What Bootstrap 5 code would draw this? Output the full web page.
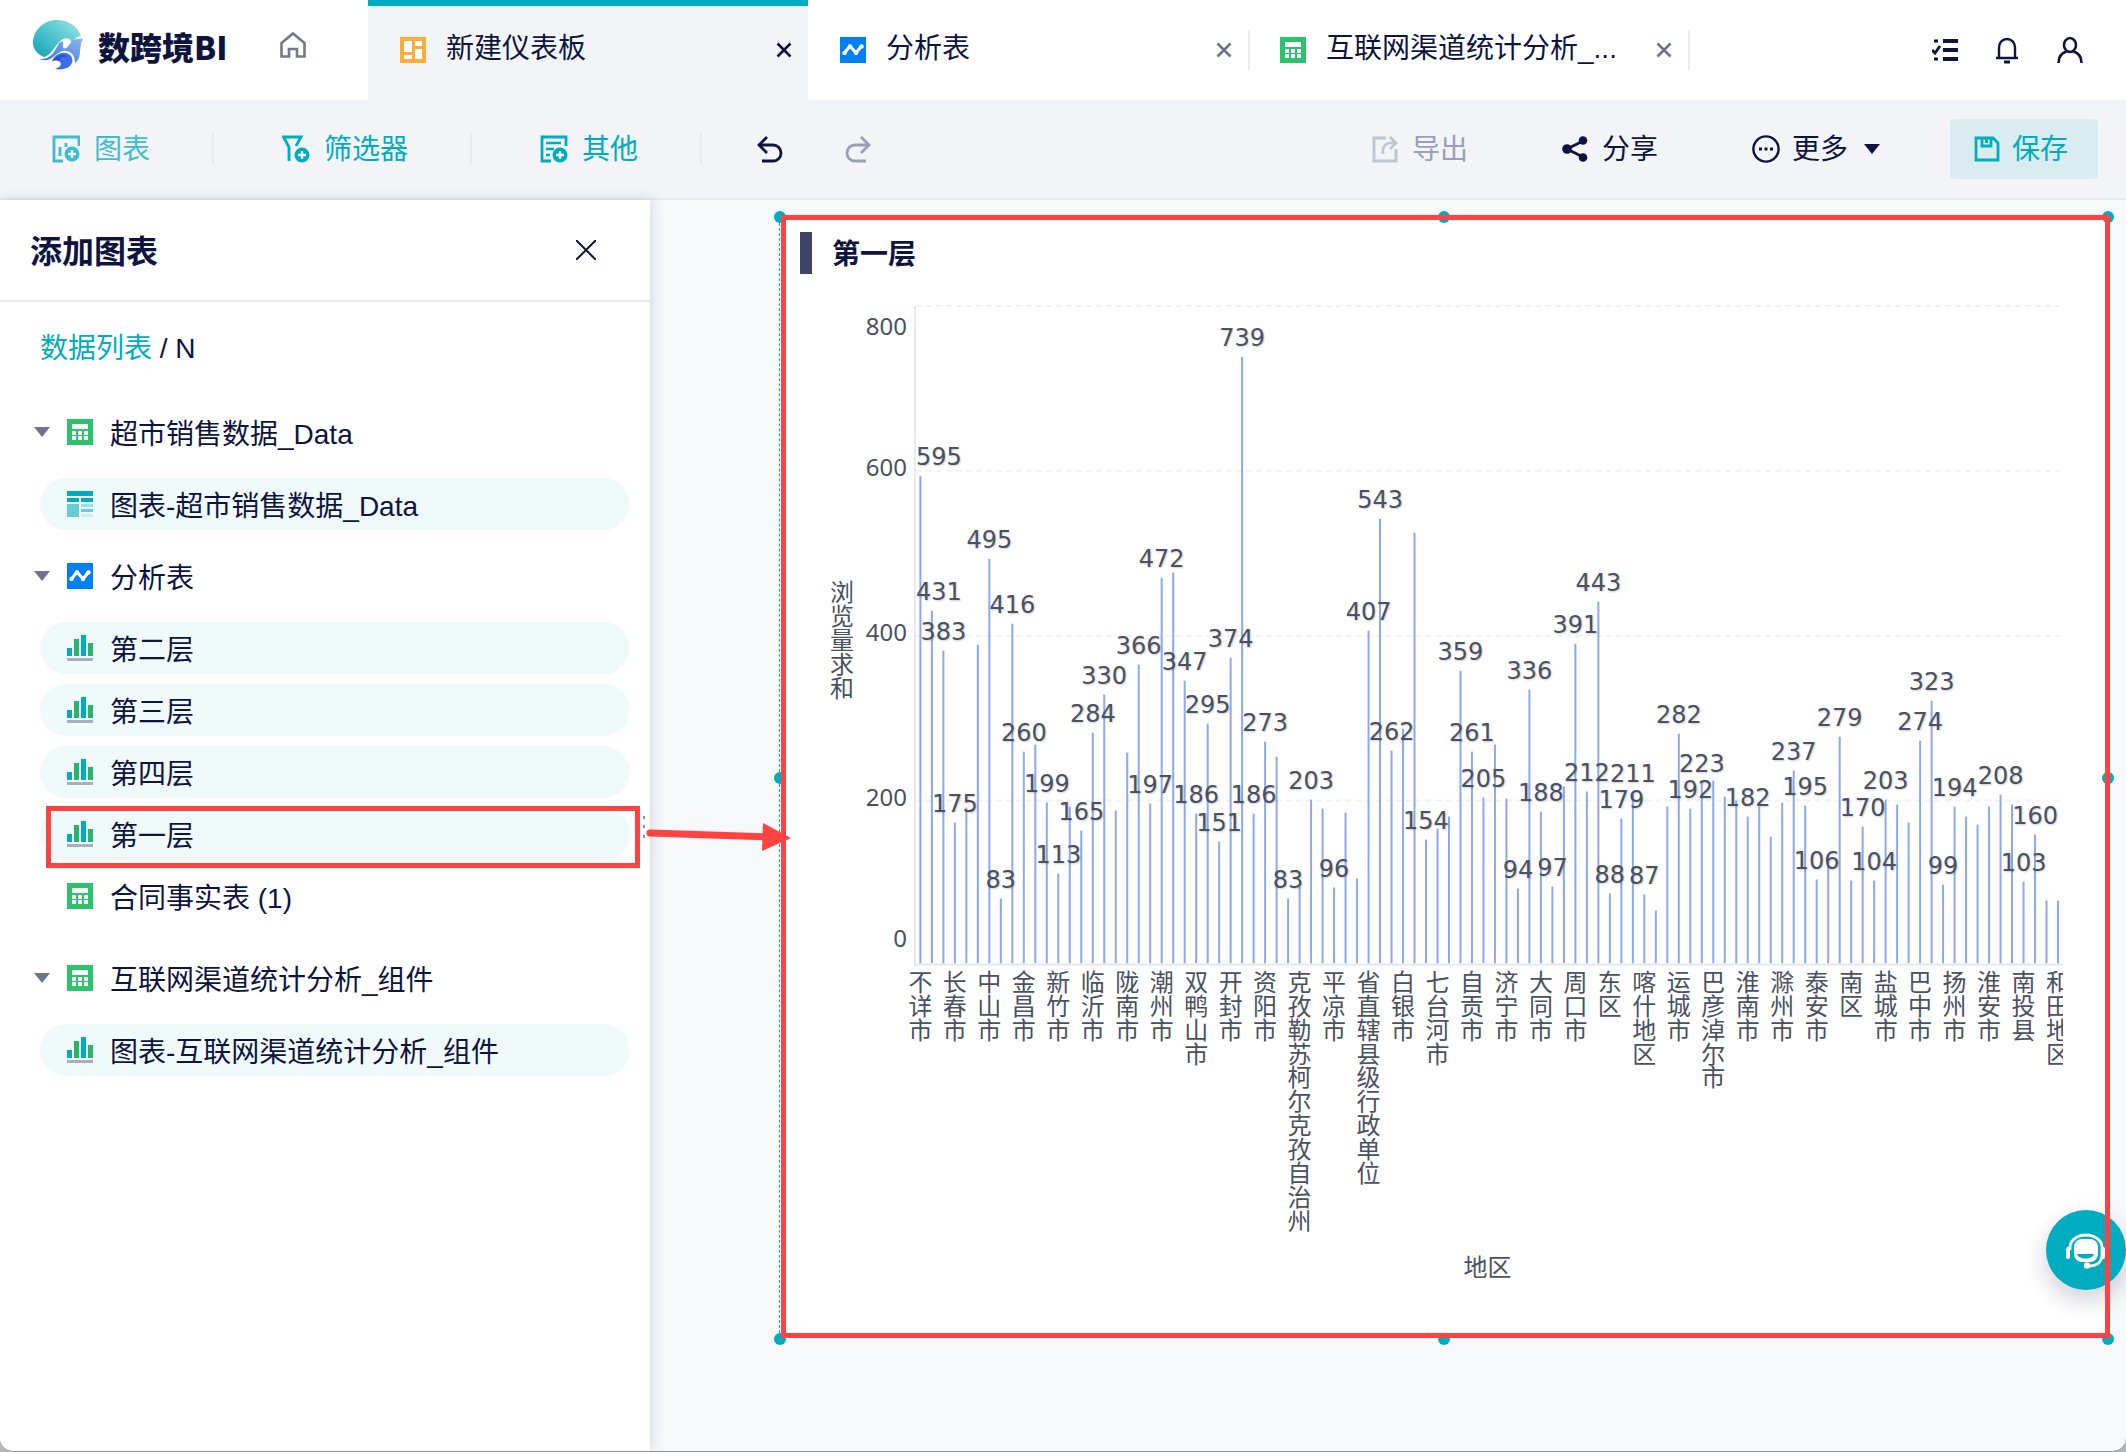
<!DOCTYPE html>
<html lang="zh-CN">
<head>
<meta charset="utf-8">
<meta name="viewport" content="width=device-width, initial-scale=1">
<title>数跨境BI</title>
<link href="https://cdn.jsdelivr.net/npm/bootstrap@5.3.0/dist/css/bootstrap.min.css" rel="stylesheet">
<style>
:root{--ink:#0e1440;--teal:#00acc0;--muted:#6f748e;--line:#e8eaee;--bar-bg:#f2f4f8;--alert:#ff4343}
body{font-family:"Liberation Sans","Noto Sans CJK SC",sans-serif;font-size:28px;line-height:40px;color:var(--ink);background:#b5b5b5}
svg{display:block;flex:none}
.app{border-radius:0 0 14px 14px;border-bottom:1px solid #949494;background:#f6f8fa}
.topbar{height:100px}
.brand{width:368px;padding-left:32px}
.brand-name{font-family:"Noto Sans CJK SC",sans-serif;font-size:32px;font-weight:900;line-height:40px;margin:0 52px 0 14px}
.brand-mark{margin-bottom:6px}
.brand-name{margin-bottom:4px}
.brand .home{margin-bottom:6px}
.tab{width:440px;padding:0 16px 2px 32px}
.tab.on{background:var(--bar-bg);box-shadow:inset 0 6px var(--teal)}
.tab a{color:var(--ink);gap:20px}
.tab a svg{margin-top:2px}
.tab.on .tab-x{color:var(--ink)}
.tab-x,.plain{border:0;background:none;padding:0;color:var(--muted)}
.tab-x{margin-top:2px}
.rule{width:2px;background:var(--line)}
.topbar .rule{height:40px;margin-right:-2px}
.tools{height:100px;background:var(--bar-bg);border-bottom:2px solid #e7e9ec;padding:0 28px 0 52px}
.tools .rule{height:32px;margin:0 68px 0 62px}
.tool{display:flex;align-items:center;gap:14px;border:0;background:none;padding:2px 0 0;color:var(--teal);white-space:nowrap}
.tool>svg,.tool>.caret{margin-bottom:2px}
.tool.dark{color:var(--ink)}
.tool.off{color:#9a9fb5}
.save{width:148px;height:60px;border-radius:4px;background:#d9edf0;padding-left:24px;margin-left:70px;gap:12px}
.side{width:650px;z-index:2;box-shadow:2px 0 12px rgba(15,20,64,.14)}
.side-head{height:102px;border-bottom:2px solid var(--line);padding:0 54px 0 30px}
.side-head h2{font-size:32px;font-weight:700;line-height:40px;padding-top:4px}
.crumb{padding:27px 40px 0;height:104px}
.crumb a{color:var(--teal)}
.tree{padding:0 20px 0 40px}
.node{display:flex;align-items:center;width:100%;height:52px;border:0;background:none;color:var(--ink);border-radius:26px;padding:6px 0 0 27px;gap:17px;text-align:left;white-space:nowrap}
.node>svg,.node>.caret{margin-bottom:6px}
.node.leaf{background:#f0fafb}
.node .caret{margin-left:-33px}
.caret{width:16px;height:10px;background:currentColor;clip-path:polygon(0 0,100% 0,50% 100%)}
.node .caret{color:var(--muted)}
.pick-frame{position:absolute;inset:-2px -10px -8px 6px;border:5px solid var(--alert);pointer-events:none}
.pick-arrow{position:absolute;left:100%;top:5px;margin-left:10px}
.canvas{padding:18px 18px 113px 129px}
.panel{height:1120px;border:1px dashed var(--teal);background:#fff}
.panel-frame{position:absolute;inset:-4px -3px -1px 1px;border:5px solid var(--alert);z-index:3;pointer-events:none}
.knobs{position:absolute;inset:-2px -1px -2px 0;pointer-events:none}
.knob{position:absolute;width:12px;height:12px;border-radius:50%;background:var(--teal);transform:translate(-50%,-50%)}
.panel-head{height:71px;padding:13px 20px 0}
.panel-head i{width:12px;height:42px;background:#3f4468}
.panel-head h3{font-size:28px;line-height:42px;font-weight:700;margin-left:20px;padding-top:2px}
.plot{padding-right:44px}
.plot text{font-family:"Noto Sans","Noto Sans CJK SC",sans-serif;font-size:24px;fill:#4a5160}
.plot .val{font-family:"DejaVu Sans",sans-serif;text-anchor:middle;text-shadow:1px 1px 2px rgba(0,0,0,.2)}
.plot .cat{writing-mode:vertical-rl;font-family:"Noto Sans CJK SC",sans-serif}
.help{position:absolute;right:0;bottom:161px;width:80px;height:80px;border:0;border-radius:50%;background:var(--teal);z-index:1;padding:0;box-shadow:0 10px 24px rgba(15,20,64,.2)}
</style>
<script src="https://cdn.jsdelivr.net/npm/bootstrap@5.3.0/dist/js/bootstrap.bundle.min.js"></script>
</head>
<body>
<svg width="0" height="0" class="position-absolute" aria-hidden="true">
  <defs>
    <symbol id="i-sheet" viewBox="0 0 26 26"><path fill="#2bc46d" d="M0 0h26v26H0z"/><path fill="#fff" d="M5 5h16v5H5zM5 12h4v4H5zm6 0h4v4h-4zm6 0h4v4h-4zM5 17h4v4H5zm6 0h4v4h-4zm6 0h4v4h-4z"/></symbol>
    <symbol id="i-line" viewBox="0 0 26 26"><path fill="#0080f5" d="M0 0h26v26H0z"/><path d="M4.500 16 10 9l6 7 5.500-7" fill="none" stroke="#fff" stroke-width="3" stroke-linejoin="round" stroke-linecap="round"/><g fill="#fff"><circle cx="4.500" cy="16" r="2.200"/><circle cx="10" cy="9.500" r="2.200"/><circle cx="16" cy="16" r="2.200"/><circle cx="21.500" cy="9.500" r="2.200"/></g></symbol>
    <symbol id="i-bars" viewBox="0 0 26 26"><path fill="#00acc0" d="M0 13h5v8H0zM14 0h5v21h-5z"/><path fill="#2ab56a" d="M7 4h5v17H7zM21 8h5v13h-5z"/><path fill="#a9afc0" d="M0 23h26v3H0z"/></symbol>
    <symbol id="i-table" viewBox="0 0 26 26"><path fill="#00acc0" d="M0 0h26v5H0zM0 7h12v4H0zm14 0h12v4H14z"/><path fill="#66ccd8" d="M0 13h12v13H0zM14 18h12v3H14z"/><path fill="#99dde5" d="M14 13h12v3H14z"/><path fill="#ccecf1" d="M14 23h12v3H14z"/></symbol>
    <symbol id="i-x" viewBox="0 0 16 16"><path d="m1.500 1.500 13 13m0-13-13 13" fill="none" stroke="currentColor" stroke-width="2.600"/></symbol>
    <symbol id="i-plus" viewBox="0 0 16 16"><circle cx="8" cy="8" r="7.500" fill="currentColor"/><path d="M8 4v8M4 8h8" stroke="#f2f4f8" stroke-width="2.400"/></symbol>
  </defs>
</svg>

<div class="app min-vh-100 d-flex flex-column overflow-hidden">
  <header class="topbar bg-white d-flex align-items-center">
    <div class="brand d-flex align-items-center pb-1">
      <svg class="brand-mark" width="52" height="50" viewBox="0 0 52 50" role="img" aria-label="logo">
        <defs>
          <linearGradient id="g1" x1="1" y1="0" x2="0" y2="1"><stop offset="0" stop-color="#a6e3e4"/><stop offset=".5" stop-color="#4fc6cf"/><stop offset="1" stop-color="#12a0b4"/></linearGradient>
          <linearGradient id="g2" x1="1" y1="0" x2="0" y2="1"><stop offset="0" stop-color="#8fb6f2"/><stop offset="1" stop-color="#2d6fe0"/></linearGradient>
        </defs>
        <path fill="url(#g1)" d="M25 0c12 0 21 7 24 16-4 0-6 3-9 7-1-4-5-6-9-4-8 4-10 16-19 18C5 34 1 29 1 23 1 10 12 0 25 0z"/>
        <path fill="url(#g2)" d="M7 39c12 1 15-7 19-14 3-5 6-4 5 0-1 4 3 5 6 0 4-6 8-7 14-6-2 3-2 6-3 12 0 6-2 10-5 12 0-8-5-13-12-12-6 1-8 6-13 8-4 2-8 1-11 0z"/>
        <path fill="#3f6ee8" d="M20 41c3-7 12-11 18-6 4 4 3 10-3 13-3 1-8 2-12 1 5-2 7-4 5-7-2-2-5-2-8-1z"/>
        <path fill="#2a52d0" d="M20 41c5-7 12-8 16-4-5-1-8 0-9 4-2-1-5-1-7 0z"/>
      </svg>
      <span class="brand-name">数跨境BI</span>
      <a href="#" aria-label="首页" class="home"><svg width="28" height="28" viewBox="0 0 28 28"><path d="M2.500 12 14 2.500 25.500 12v13.500H18V18h-8v7.500H2.500z" fill="none" stroke="#73788c" stroke-width="2.600"/></svg></a>
    </div>
    <nav class="d-flex align-items-center h-100 text-nowrap">
      <div class="tab on h-100 d-flex align-items-center justify-content-between">
        <a href="#" class="d-flex align-items-center text-decoration-none"><svg width="26" height="26" viewBox="0 0 26 26"><path fill="#ffac38" d="M0 0h26v26H0z"/><path fill="#fff" d="M4 4h8v11H4zM4 18h8v4H4zM15 4h7v5h-7zM15 12h7v10h-7z"/></svg>新建仪表板</a>
        <button class="tab-x" aria-label="关闭"><svg width="16" height="16"><use href="#i-x"/></svg></button>
      </div>
      <div class="tab h-100 d-flex align-items-center justify-content-between">
        <a href="#" class="d-flex align-items-center text-decoration-none"><svg width="26" height="26"><use href="#i-line"/></svg>分析表</a>
        <button class="tab-x" aria-label="关闭"><svg width="16" height="16"><use href="#i-x"/></svg></button>
      </div>
      <span class="rule"></span>
      <div class="tab h-100 d-flex align-items-center justify-content-between">
        <a href="#" class="d-flex align-items-center text-decoration-none"><svg width="26" height="26"><use href="#i-sheet"/></svg>互联网渠道统计分析_...</a>
        <button class="tab-x" aria-label="关闭"><svg width="16" height="16"><use href="#i-x"/></svg></button>
      </div>
      <span class="rule"></span>
    </nav>
    <div class="d-flex align-items-center ms-auto" style="gap:36px;padding-right:42px">
      <button class="plain" aria-label="任务"><svg width="26" height="26" viewBox="0 0 26 26"><path d="M11 4h15M11 13h15M11 22h15" stroke="#0e1440" stroke-width="3.800"/><path d="M2 4h4M2 22h4M0 13l3 3 5-7" stroke="#0e1440" stroke-width="2.800" fill="none"/></svg></button>
      <button class="plain" aria-label="通知"><svg width="26" height="28" viewBox="0 0 26 28"><path d="M2 22h22M5 22V11a8 8 0 0 1 16 0v11" stroke="#0e1440" stroke-width="2.400" fill="none"/><path d="M10 26h6" stroke="#0e1440" stroke-width="3"/></svg></button>
      <button class="plain" aria-label="用户"><svg width="28" height="28" viewBox="0 0 28 28"><ellipse cx="14" cy="9" rx="6" ry="7" stroke="#0e1440" stroke-width="2.600" fill="none"/><path d="M2.500 27c0-6 3-10 8-11.500M25.500 27c0-6-3-10-8-11.500" stroke="#0e1440" stroke-width="2.600" fill="none"/></svg></button>
    </div>
  </header>

  <div class="tools d-flex align-items-center">
    <button class="tool opacity-75"><svg width="28" height="28" viewBox="0 0 28 28"><path d="M27 11V2H2v24h9" fill="none" stroke="currentColor" stroke-width="2.800"/><path d="M8 12v9M14 8v4" stroke="currentColor" stroke-width="2.800"/><use href="#i-plus" x="12" y="11" width="16" height="16"/></svg>图表</button>
    <span class="rule"></span>
    <button class="tool"><svg width="28" height="28" viewBox="0 0 28 28"><path d="M7 26V12L1.500 2H19l-5 9" fill="none" stroke="currentColor" stroke-width="2.800"/><use href="#i-plus" x="12" y="12" width="16" height="16"/></svg>筛选器</button>
    <span class="rule"></span>
    <button class="tool"><svg width="28" height="28" viewBox="0 0 28 28"><path d="M26 11V2H2v24h9" fill="none" stroke="currentColor" stroke-width="2.800"/><path d="M6 8h15M6 14h8M6 20h4" stroke="currentColor" stroke-width="2.600"/><use href="#i-plus" x="12" y="12" width="16" height="16"/></svg>其他</button>
    <span class="rule"></span>
    <div class="d-flex" style="gap:60px;margin-left:-14px">
      <button class="tool dark" aria-label="撤销"><svg width="28" height="28" viewBox="0 0 28 28"><path d="M11 2 3 10l8 8M3 10h14a8 8 0 0 1 0 16H6" fill="none" stroke="currentColor" stroke-width="2.800"/></svg></button>
      <button class="tool off" aria-label="重做"><svg width="28" height="28" viewBox="0 0 28 28"><path d="m17 2 8 8-8 8m8-8H11a8 8 0 0 0 0 16h11" fill="none" stroke="currentColor" stroke-width="2.800"/></svg></button>
    </div>
    <div class="d-flex align-items-center ms-auto">
      <button class="tool off"><svg width="26" height="28" viewBox="0 0 26 28" opacity=".55"><path d="M14 3H2v23h22V14" fill="none" stroke="currentColor" stroke-width="2.800"/><path d="M11 19v-4a7 7 0 0 1 7-7h6M18 2l6 6-6 6" fill="none" stroke="currentColor" stroke-width="2.600"/></svg>导出</button>
      <button class="tool dark" style="margin-left:94px"><svg width="26" height="26" viewBox="0 0 26 26"><path d="M21 5 5 13l16 8" fill="none" stroke="currentColor" stroke-width="2.800"/><g fill="currentColor"><circle cx="21" cy="4.500" r="4.300"/><circle cx="5" cy="13" r="4.800"/><circle cx="21" cy="21.500" r="4.300"/></g></svg>分享</button>
      <button class="tool dark" style="margin-left:94px;gap:12px"><svg width="28" height="28" viewBox="0 0 28 28"><circle cx="14" cy="14" r="12.600" fill="none" stroke="currentColor" stroke-width="2.400"/><path d="M7 14h3m2.500 0h3M18 14h3" stroke="currentColor" stroke-width="2.800"/></svg>更多<span class="caret ms-1"></span></button>
      <button class="tool save"><svg width="26" height="26" viewBox="0 0 26 26"><path d="M2 2h17l5 5v17H2zM8 2v8h9V2M12.500 3v4" fill="none" stroke="currentColor" stroke-width="2.800"/></svg>保存</button>
    </div>
  </div>

  <main class="d-flex flex-grow-1 position-relative">
    <aside class="side bg-white position-relative flex-shrink-0">
      <div class="side-head d-flex align-items-center justify-content-between">
        <h2 class="m-0">添加图表</h2>
        <button class="plain" aria-label="关闭"><svg width="20" height="20" viewBox="0 0 20 20"><path d="m0 0 20 20M20 0 0 20" stroke="#0e1440" stroke-width="2"/></svg></button>
      </div>
      <div class="crumb"><a href="#" class="text-decoration-none">数据列表</a> / N</div>
      <div class="tree">
        <button class="node"><span class="caret"></span><svg width="26" height="26"><use href="#i-sheet"/></svg>超市销售数据_Data</button>
        <button class="node leaf" style="margin:20px 0"><svg width="26" height="26"><use href="#i-table"/></svg>图表-超市销售数据_Data</button>
        <button class="node"><span class="caret"></span><svg width="26" height="26"><use href="#i-line"/></svg>分析表</button>
        <div class="d-grid" style="gap:10px;margin:20px 0 30px">
          <button class="node leaf"><svg width="26" height="26"><use href="#i-bars"/></svg>第二层</button>
          <button class="node leaf"><svg width="26" height="26"><use href="#i-bars"/></svg>第三层</button>
          <button class="node leaf"><svg width="26" height="26"><use href="#i-bars"/></svg>第四层</button>
          <div class="position-relative">
            <button class="node leaf"><svg width="26" height="26"><use href="#i-bars"/></svg>第一层</button>
            <span class="pick-frame"></span>
            <svg class="pick-arrow" width="152" height="44" viewBox="0 0 152 44"><path d="M4 3v3m0 6v3m0 7v3" stroke="#8b90a5" stroke-width="2"/><path d="m10 20 118 4" stroke="#ff4343" stroke-width="7" stroke-linecap="round"/><path d="m123 10 28 15-29 13z" fill="#ff4343"/></svg>
          </div>
          <button class="node"><svg width="26" height="26"><use href="#i-sheet"/></svg>合同事实表 (1)</button>
        </div>
        <button class="node"><span class="caret"></span><svg width="26" height="26"><use href="#i-sheet"/></svg>互联网渠道统计分析_组件</button>
        <button class="node leaf" style="margin-top:20px"><svg width="26" height="26"><use href="#i-bars"/></svg>图表-互联网渠道统计分析_组件</button>
      </div>
    </aside>

    <section class="canvas flex-grow-1">
      <div class="panel position-relative">
        <div class="panel-head d-flex"><i></i><h3 class="mb-0">第一层</h3></div>
        <div class="plot"><svg id="chart" class="w-100" viewBox="0 0 1284 1000" role="img" aria-label="各地区浏览量求和"></svg></div>
        <div class="knobs">
          <span class="knob" style="left:0;top:0"></span><span class="knob" style="left:50%;top:0"></span><span class="knob" style="left:100%;top:0"></span>
          <span class="knob" style="left:0;top:50%"></span><span class="knob" style="left:100%;top:50%"></span>
          <span class="knob" style="left:0;top:100%"></span><span class="knob" style="left:50%;top:100%"></span><span class="knob" style="left:100%;top:100%"></span>
        </div>
        <span class="panel-frame"></span>
      </div>
    </section>
    <button class="help" aria-label="在线客服"><svg width="80" height="80" viewBox="0 0 80 80"><path d="M24 40v-3a16 12 0 0 1 32 0v8c0 7-5 11-14 11" fill="none" stroke="#fff" stroke-width="2.800"/><rect x="28" y="29" width="24" height="23" rx="8" fill="#fff"/><path d="M31 44h17c-1 6-16 6-17 0z" fill="#00acc0"/><rect x="20" y="37" width="4" height="12" rx="2" fill="#fff"/><rect x="55" y="37" width="4" height="12" rx="2" fill="#fff"/><circle cx="41" cy="55.500" r="3.200" fill="#fff"/></svg></button>
  </main>
</div>

<script>
// Page views per region; negative values are drawn without a label.
const views = [595,431,383,175,-193,-390,495,83,416,260,-269,199,113,-194,165,284,330,-189,-259,366,
  197,472,-478,347,186,295,151,374,739,186,273,-255,83,-97,203,-192,96,-187,-107,407,
  543,262,-288,-526,154,-167,-182,359,261,205,-269,-204,94,336,188,97,-218,391,212,443,
  88,179,211,87,-68,-194,282,192,223,-225,-206,-201,182,-194,-158,-199,237,195,106,-121,
  279,-104,170,104,203,-196,-175,274,323,99,194,-182,-172,-194,208,-196,103,160,-80,-80];
const regions = '不详市 长春市 中山市 金昌市 新竹市 临沂市 陇南市 潮州市 双鸭山市 开封市 资阳市 克孜勒苏柯尔克孜自治州 平凉市 省直辖县级行政单位 白银市 七台河市 自贡市 济宁市 大同市 周口市 东区 喀什地区 运城市 巴彦淖尔市 淮南市 滁州市 泰安市 南区 盐城市 巴中市 扬州市 淮安市 南投县 和田地区'.split(' ');
const base = 677, unit = 0.825, first = 140.5, step = 11.5;
let out = '';
for (let k = 1; k <= 4; k++) {
  const y = 676 - k * 165;
  out += `<path d="M136 ${y}H1280" stroke="#f1f2f6" stroke-width="2" stroke-dasharray="6 4"/>`;
}
views.forEach((v, i) => {
  const h = Math.round(Math.abs(v) * unit);
  out += `<rect x="${first + i * step - 1}" y="${base - h}" width="2" height="${h - 3}" fill="#8ca8f2"/>`;
});
out += '<path d="M135 16v661M134 675h1150" stroke="#e6e8ee" stroke-width="2" fill="none"/>';
[[800, 45], [600, 186], [400, 351], [200, 516], [0, 658]].forEach(([t, y]) => {
  out += `<text x="127" y="${y}" text-anchor="end">${t}</text>`;
});
views.forEach((v, i) => {
  if (v > 0) out += `<text class="val" x="${Math.max(159, first + i * step)}" y="${base - Math.round(v * unit) - 11}">${v}</text>`;
});
regions.forEach((r, i) => {
  out += `<text class="cat" x="${first + i * step * 3}" y="680">${r}</text>`;
});
out += '<text class="cat" x="62" y="290">浏览量求和</text><text x="708" y="987" text-anchor="middle">地区</text>';
document.getElementById('chart').innerHTML = out;
</script>
</body>
</html>
